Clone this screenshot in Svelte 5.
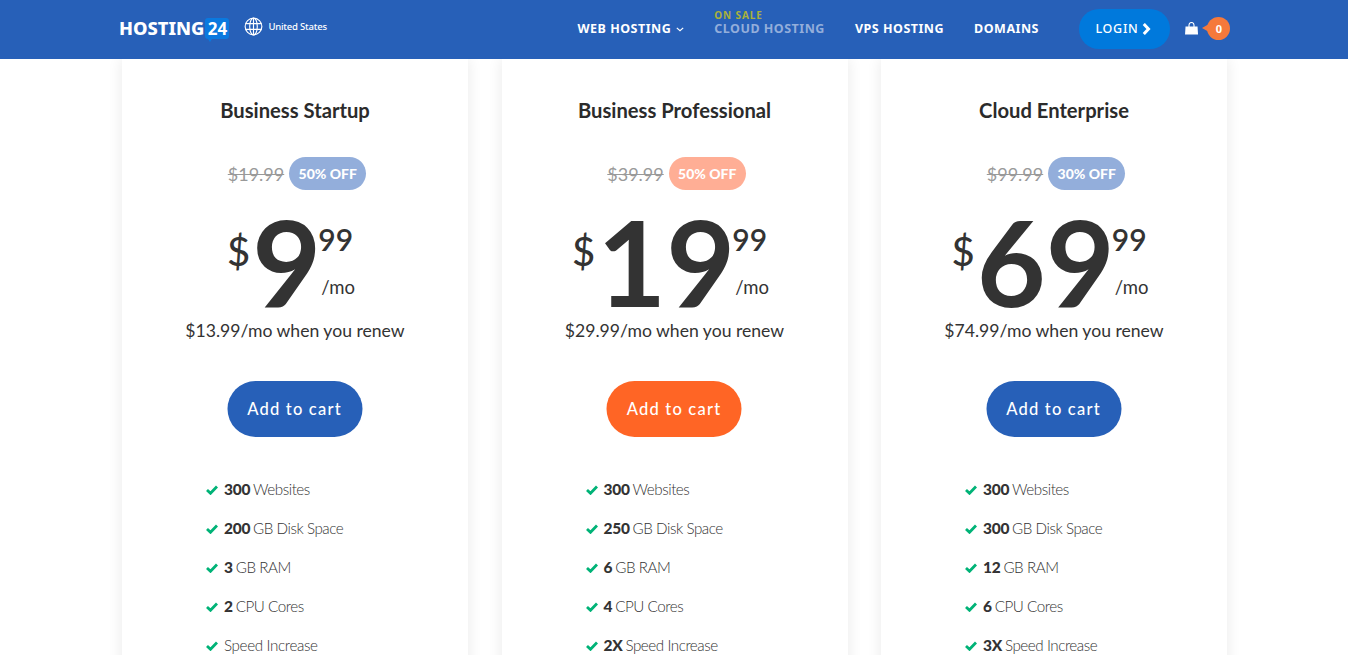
<script>
  const plans = [
    { name: 'Business Startup', old: '$19.99', off: '50% OFF', tone: 'blue', whole: '9', renew: '$13.99', btn: 'blue',
      f: [['300','Websites'],['200','GB Disk Space'],['3','GB RAM'],['2','CPU Cores'],['','Speed Increase']] },
    { name: 'Business Professional', old: '$39.99', off: '50% OFF', tone: 'orange', whole: '19', renew: '$29.99', btn: 'orange',
      f: [['300','Websites'],['250','GB Disk Space'],['6','GB RAM'],['4','CPU Cores'],['2X','Speed Increase']] },
    { name: 'Cloud Enterprise', old: '$99.99', off: '30% OFF', tone: 'blue', whole: '69', renew: '$74.99', btn: 'blue',
      f: [['300','Websites'],['300','GB Disk Space'],['12','GB RAM'],['6','CPU Cores'],['3X','Speed Increase']] }
  ];
</script>

<div class="page">
  <header class="top">
    <div class="brand">
      <span class="logo">HOSTING</span>
      <span class="logo-num">24</span>
      <svg class="globe" viewBox="0 0 20 20" width="19" height="19" fill="none" stroke="#fff" stroke-width="1.2">
        <circle cx="10" cy="10" r="8.8"/>
        <ellipse cx="10" cy="10" rx="4" ry="8.8"/>
        <path d="M10 1.2v17.6M1.6 7h16.8M1.6 13h16.8"/>
      </svg>
      <span class="country">United States</span>
    </div>
    <nav class="nav">
      <a class="link" href="#a">WEB HOSTING<svg viewBox="0 0 10 6" width="8" height="5" fill="none" stroke="#fff" stroke-width="1.5"><path d="M1 1l4 3.6L9 1"/></svg></a>
      <a class="link sale" href="#b"><span class="tag">ON SALE</span>CLOUD HOSTING</a>
      <a class="link" href="#c">VPS HOSTING</a>
      <a class="link" href="#d">DOMAINS</a>
    </nav>
    <a class="login" href="#e">LOGIN
      <svg viewBox="0 0 9 12" width="9" height="12" fill="none" stroke="#fff" stroke-width="3"><path d="M1.800 1L6.500 6l-4.700 5"/></svg>
    </a>
    <svg class="bag" viewBox="0 0 13 13" width="13" height="13">
      <path fill="#fff" d="M0.500 4.500h12L13 12.500H0z"/>
      <path fill="none" stroke="#fff" stroke-width="1.100" d="M4 5V3a2.500 2.500 0 0 1 5 0v2"/>
    </svg>
    <span class="count">0</span>
  </header>

  <main class="plans">
    {#each plans as p}
      <section class="card">
        <h2>{p.name}</h2>
        <div class="discount">
          <s>{p.old}</s>
          <span class="pill {p.tone}">{p.off}</span>
        </div>
        <div class="price">
          <span class="cur">$</span>
          <span class="whole">{p.whole}</span>
          <span class="side"><span class="cents">99</span><span class="mo">/mo</span></span>
        </div>
        <p class="renew">{p.renew}/mo when you renew</p>
        <a class="cart {p.btn}" href="#f">Add to cart</a>
        <ul>
          {#each p.f as [b, t]}
            <li>
              <svg viewBox="0 0 12 10" width="12" height="10" fill="none" stroke="#00b377" stroke-width="2.800"><path d="M1 5l3.500 3.300L11 1.500"/></svg>
              {#if b}<b>{b}</b>{/if}
              <span>{t}</span>
            </li>
          {/each}
        </ul>
      </section>
    {/each}
  </main>
</div>

<style>
  :global(body) { margin: 0; background: #fff; overflow: hidden; }
  .page { height: 655px; overflow: hidden; font-family: Lato, "Liberation Sans", sans-serif; color: #333; }
  a { text-decoration: none; }

  .top { height: 59px; background: #2760b8; display: flex; align-items: center; position: relative; z-index: 1; padding: 0 0 2px 119px; box-sizing: border-box; }
  .brand { display: flex; align-items: center; width: 458.500px; }
  .logo { font: 800 18.300px "Noto Sans", sans-serif; color: #fff; margin-bottom: 3px; }
  .logo-num { margin-left: 1px; width: 24px; text-align: center; background: #0a79df; color: #fff; font: 700 17px "Noto Sans", sans-serif; border-radius: 3px; height: 21px; line-height: 21px; position: relative; margin-bottom: 1px; }
  .logo-num::after { content: ""; position: absolute; left: 3px; bottom: -3px; border: 2px solid transparent; border-top: 3px solid #0a79df; border-bottom: 0; }
  .globe { margin-left: 15px; margin-bottom: 4px; }
  .country { margin-left: 5px; margin-bottom: 4px; font: 500 9.500px "Noto Sans", sans-serif; letter-spacing: -0.200px; color: #fff; }

  .nav { display: flex; gap: 30px; }
  .link { position: relative; color: #fff; font: 700 12.500px "Noto Sans", sans-serif; letter-spacing: 0.500px; white-space: nowrap; }
  .link svg { margin-left: 5px; vertical-align: 1px; }
  .sale { color: #93aedb; }
  .tag { position: absolute; left: 0; top: -10px; font-size: 10px; line-height: 11px; color: #a9b13c; letter-spacing: 0.900px; }

  .login { margin-left: 40.500px; width: 91px; height: 40px; border-radius: 20px; background: #0079dc; color: #fff; display: flex; align-items: center; justify-content: center; gap: 4px; padding-right: 3px; box-sizing: border-box; font: 500 12.500px "Noto Sans", sans-serif; letter-spacing: 0.700px; }
  .bag { margin-left: 15px; }
  .count { margin-left: 9px; width: 23px; height: 23px; border-radius: 50%; background: #f5793b; color: #fff; font: 700 11px/23px "Noto Sans", sans-serif; text-align: center; position: relative; }
  .count::before { content: ""; position: absolute; left: -5px; top: 7px; border: 4.500px solid transparent; border-left: 0; border-right: 7px solid #f5793b; }

  .plans { width: 1105px; margin: 0 0 0 122px; display: grid; grid-template-columns: repeat(3, 346px); column-gap: 33.500px; }
  .card { background: #fff; box-shadow: 0 0 14px rgba(0,0,0,.09); height: 700px; text-align: center; padding-top: 37.500px; box-sizing: border-box; }
  h2 { margin: 0; font-size: 20.200px; line-height: 27px; font-weight: 700; color: #2b2b2b; }

  .discount { margin-top: 33.500px; height: 33px; display: flex; justify-content: center; align-items: center; gap: 5px; padding-left: 4px; }
  s { font-size: 18px; color: #999; }
  .pill { width: 77px; height: 33px; line-height: 33px; border-radius: 17px; color: #fff; font-size: 14px; font-weight: 900; }
  .pill.blue { background: #93aedb; }
  .pill.orange { background: #ffae95; }

  .price { margin-top: 16px; height: 110px; display: flex; justify-content: center; color: #333; padding-right: 8px; }
  .cur { font-size: 40px; line-height: 48px; margin-top: 21px; margin-right: 2px; font-weight: 500; }
  .whole { font-size: 119px; line-height: 110px; font-weight: 700; }
  .side { display: flex; flex-direction: column; align-items: flex-start; margin-left: -3px; }
  .cents { font-size: 30px; line-height: 38px; margin-top: 14px; font-weight: 600; }
  .mo { font-size: 18.500px; line-height: 24px; margin-top: 17px; margin-left: 3px; }

  .renew { margin: 2px 0 0; font-size: 17.600px; line-height: 26px; color: #333; }

  .cart { display: block; margin: 37px auto 0; width: 135px; height: 56px; line-height: 56px; border-radius: 28px; color: #fff; font-size: 16.500px; font-weight: 500; letter-spacing: 1.200px; transform: translateX(-0.500px); }
  .cart.blue { background: #2760b8; }
  .cart.orange { background: #ff6525; }

  ul { list-style: none; margin: 33px 0 0; padding: 0 0 0 84px; text-align: left; }
  li { height: 39px; line-height: 39px; font-size: 15.500px; display: flex; align-items: center; gap: 5px; white-space: nowrap; }
  li svg { margin-right: 1px; }
  li b { font-weight: 900; color: #333; letter-spacing: -0.300px; }
  li span { font-weight: 300; font-size: 15.200px; color: #333; letter-spacing: -0.450px; margin-left: -2px; }
  li svg + span { margin-left: 0; letter-spacing: -0.350px; }
</style>
